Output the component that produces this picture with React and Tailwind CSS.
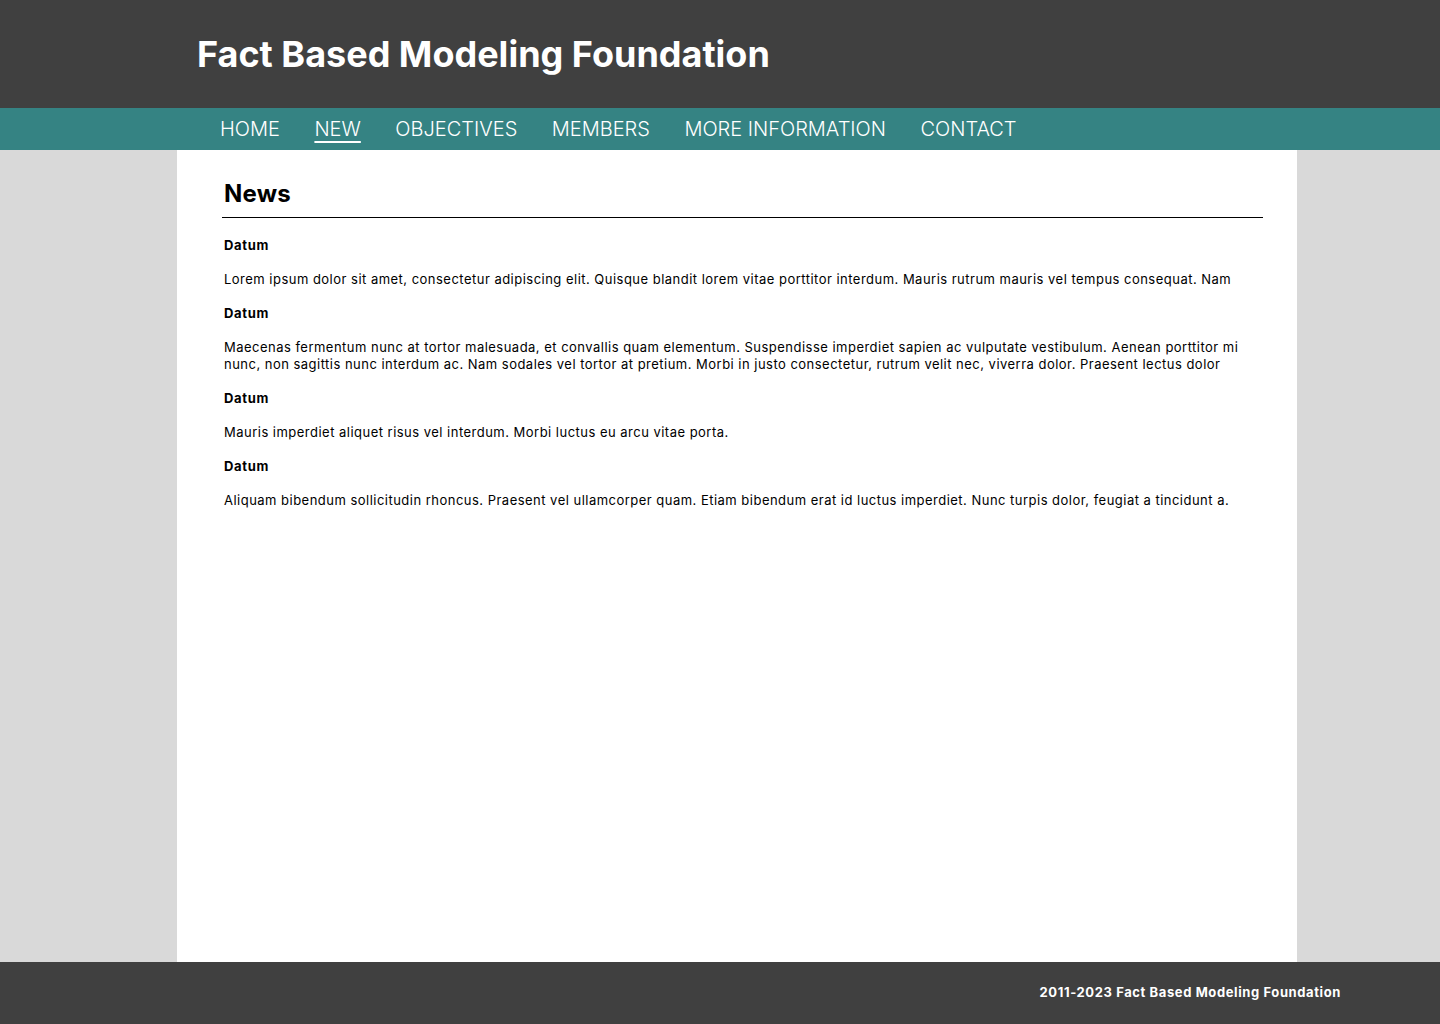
const items = [
  { date: "Datum", text: "Lorem ipsum dolor sit amet, consectetur adipiscing elit. Quisque blandit lorem vitae porttitor interdum. Mauris rutrum mauris vel tempus consequat. Nam" },
  { date: "Datum", text: "Maecenas fermentum nunc at tortor malesuada, et convallis quam elementum. Suspendisse imperdiet sapien ac vulputate vestibulum. Aenean porttitor mi nunc, non sagittis nunc interdum ac. Nam sodales vel tortor at pretium. Morbi in justo consectetur, rutrum velit nec, viverra dolor. Praesent lectus dolor" },
  { date: "Datum", text: "Mauris imperdiet aliquet risus vel interdum. Morbi luctus eu arcu vitae porta." },
  { date: "Datum", text: "Aliquam bibendum sollicitudin rhoncus. Praesent vel ullamcorper quam. Etiam bibendum erat id luctus imperdiet. Nunc turpis dolor, feugiat a tincidunt a." },
];

const nav = ["HOME", "NEW", "OBJECTIVES", "MEMBERS", "MORE INFORMATION", "CONTACT"];

export default function App() {
  return (
    <div className="min-h-screen flex flex-col bg-[#d9d9d9] font-['Inter',sans-serif]">
      <header className="h-[108px] bg-[#404040] flex items-center pl-[197px]">
        <h1 className="text-white text-[36px] font-bold leading-none">Fact Based Modeling Foundation</h1>
      </header>

      <nav className="h-[42px] bg-[#358383] flex items-center pl-[220px] gap-[34.5px]">
        {nav.map((n) => (
          <a
            key={n}
            className={`text-white text-[20px] font-light leading-none ${
              n === "NEW" ? "underline underline-offset-[5px] decoration-[1.5px]" : ""
            }`}
          >
            {n}
          </a>
        ))}
      </nav>

      <main className="flex-1 flex">
        <div className="ml-[177px] w-[1120px] bg-white pt-[29px] pl-[45px] pr-[34px]">
          <h2 className="text-[24px] font-bold leading-[30px] pl-[2px] text-black tracking-[0.2px]">News</h2>
          <hr className="mt-[8px] border-0 h-px bg-black" />
          <div className="pl-[2px] pt-[19px] text-[13px] leading-[17px] text-black tracking-[0.48px]">
            {items.map((it, i) => (
              <div key={i}>
                <p className="font-bold tracking-[0.7px]">{it.date}</p>
                <p className="mt-[17px] mb-[17px] max-w-[1035px]">{it.text}</p>
              </div>
            ))}
          </div>
        </div>
      </main>

      <footer className="h-[62px] bg-[#404040] flex items-center justify-end pr-[99px]">
        <span className="text-white text-[13px] font-bold tracking-[0.6px]">2011-2023 Fact Based Modeling Foundation</span>
      </footer>
    </div>
  );
}
